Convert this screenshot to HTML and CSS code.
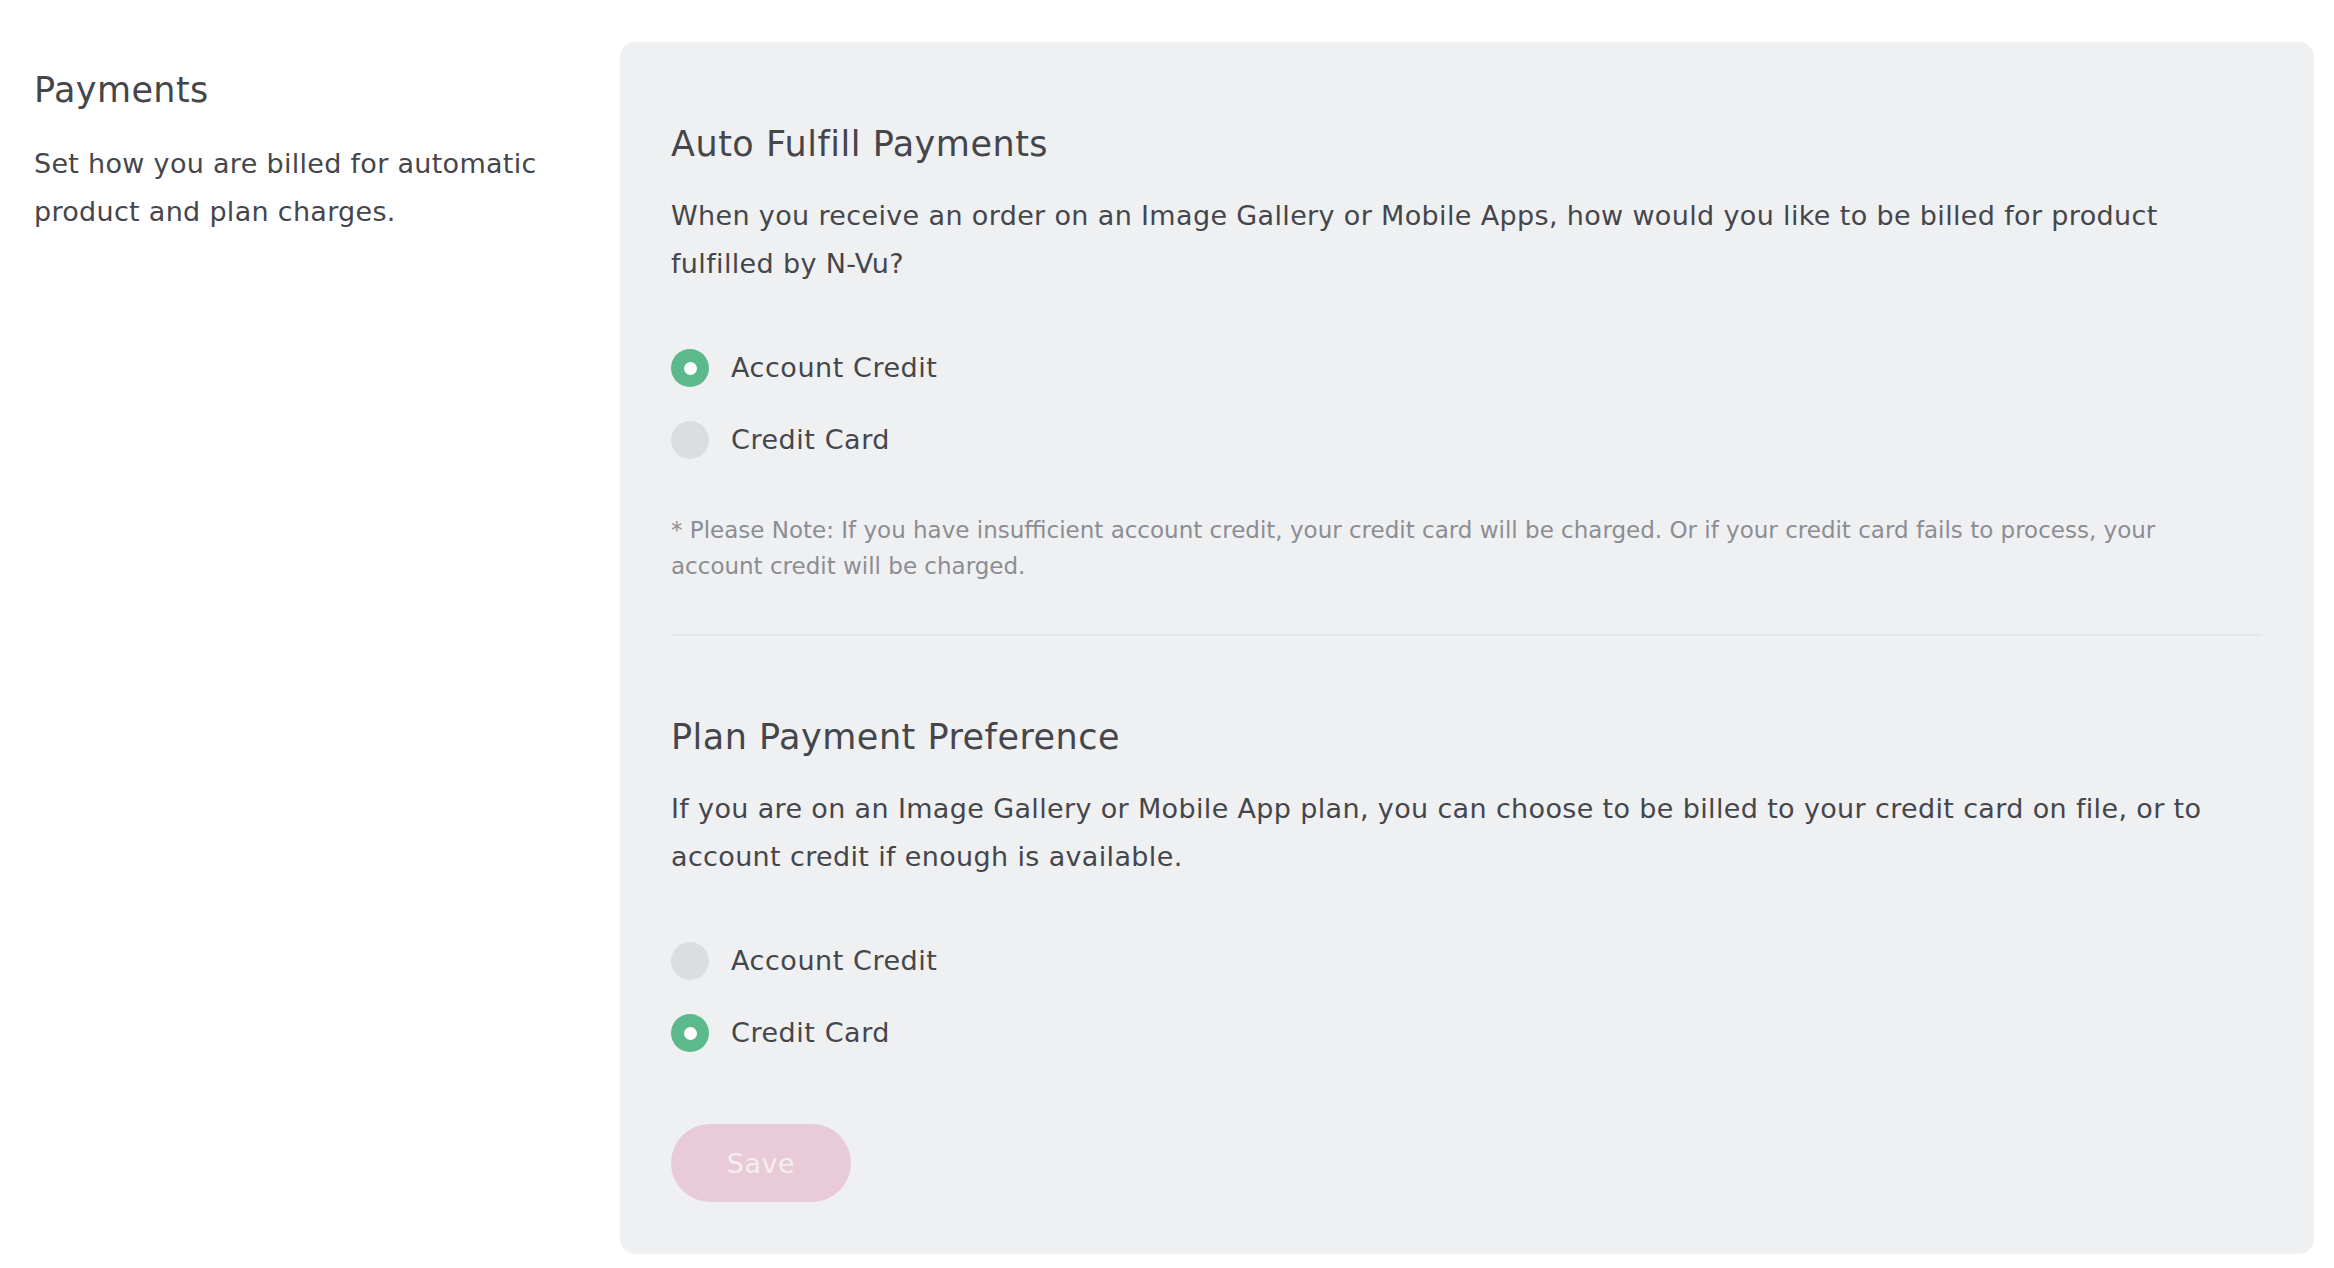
FILE: index.html
```html
<!DOCTYPE html>
<html>
<head>
<meta charset="utf-8">
<link rel="stylesheet" href="styles.css">
</head>
<body>
<div class="page">
  <aside class="side">
    <h1 class="side-title">Payments</h1>
    <p class="side-desc">Set how you are billed for automatic product and plan charges.</p>
  </aside>
  <main class="panel">
    <section class="group">
      <h2 class="group-title">Auto Fulfill Payments</h2>
      <p class="group-text">When you receive an order on an Image Gallery or Mobile Apps, how would you like to be billed for product fulfilled by N-Vu?</p>
      <div class="options">
        <label class="option"><span class="radio on"></span><span class="option-label">Account Credit</span></label>
        <label class="option"><span class="radio"></span><span class="option-label">Credit Card</span></label>
      </div>
      <p class="note">* Please Note: If you have insufficient account credit, your credit card will be charged. Or if your credit card fails to process, your account credit will be charged.</p>
    </section>
    <hr class="divider">
    <section class="group">
      <h2 class="group-title">Plan Payment Preference</h2>
      <p class="group-text">If you are on an Image Gallery or Mobile App plan, you can choose to be billed to your credit card on file, or to account credit if enough is available.</p>
      <div class="options">
        <label class="option"><span class="radio"></span><span class="option-label">Account Credit</span></label>
        <label class="option"><span class="radio on"></span><span class="option-label">Credit Card</span></label>
      </div>
      <button class="save">Save</button>
    </section>
  </main>
</div>
</body>
</html>
```

FILE: styles.css
```css
* { box-sizing: border-box; }
html, body { margin: 0; padding: 0; background: #ffffff; }
body {
  font-family: "DejaVu Sans", "Liberation Sans", sans-serif;
  color: #45464b;
}
.page {
  display: flex;
  align-items: flex-start;
  padding: 42px 20px 15px 34px;
}
.side {
  width: 586px;
  flex: none;
  padding-top: 24px;
}
.side-title {
  margin: 0;
  font-size: 35px;
  font-weight: 400;
  letter-spacing: 0.4px;
  line-height: 48px;
}
.side-desc {
  margin: 26px 0 0;
  font-size: 27px;
  letter-spacing: 0.3px;
  line-height: 48px;
  width: 530px;
}
.panel {
  flex: 1;
  background: #eff0f2;
  border-radius: 15px;
  padding: 78px 52px 52px 51px;
}
.group { display: flex; flex-direction: column; align-items: flex-start; }
.group-title {
  margin: 0;
  font-size: 35px;
  font-weight: 400;
  letter-spacing: 0.5px;
  line-height: 48px;
}
.group-text {
  margin: 24px 0 0;
  font-size: 27px;
  letter-spacing: 0.35px;
  line-height: 48px;
}
.options {
  display: flex;
  flex-direction: column;
  gap: 34px;
  margin-top: 61px;
}
.option {
  display: flex;
  align-items: center;
  gap: 22px;
  font-size: 27px;
  letter-spacing: 0.55px;
  line-height: 38px;
}
.radio {
  width: 38px;
  height: 38px;
  border-radius: 50%;
  background: #dcdde0;
  flex: none;
  display: flex;
  align-items: center;
  justify-content: center;
}
.radio.on { background: #5cb98c; }
.radio.on::after {
  content: "";
  width: 13px;
  height: 13px;
  border-radius: 50%;
  background: #ffffff;
}
.note {
  margin: 53px 0 0;
  max-width: 1530px;
  font-size: 23px;
  letter-spacing: 0;
  line-height: 36px;
  color: #8c8d92;
}
.divider {
  border: none;
  border-top: 2px solid #e6e7ea;
  margin: 50px 0 0;
  width: 100%;
}
.divider + .group { margin-top: 77px; }
.save {
  margin-top: 72px;
  width: 180px;
  height: 78px;
  border: none;
  border-radius: 39px;
  background: #e9cbd7;
  color: #f5edf1;
  font-family: inherit;
  font-size: 27px;
  letter-spacing: 0.5px;
}
```
